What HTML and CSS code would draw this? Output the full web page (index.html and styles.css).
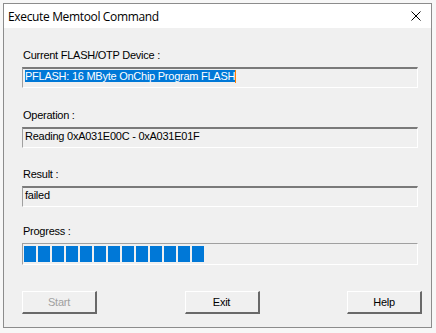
FILE: index.html
```html
<html>
	<head>
		<meta charset="utf-8"/>
		<link rel="stylesheet" href="styles.css">
	</head>
	<body>
		<div class="desktop">
			<div class="dialog">
				<div class="titlebar">
					<span class="title">Execute Memtool Command</span>
					<svg class="close" width="10" height="10" viewBox="0 0 10 10">
						<path d="M0.5 0.5 L9.5 9.5 M9.5 0.5 L0.5 9.5" stroke="#000" stroke-width="1" fill="none"/>
					</svg>
				</div>
				<div class="client">
					<div class="group g1">
						<div class="label">Current FLASH/OTP Device :</div>
						<div class="field"><span class="selected">PFLASH: 16 MByte OnChip Program FLASH</span><span class="caret"></span></div>
					</div>
					<div class="group g2">
						<div class="label">Operation :</div>
						<div class="field">Reading 0xA031E00C - 0xA031E01F</div>
					</div>
					<div class="group g3">
						<div class="label">Result :</div>
						<div class="field">failed</div>
					</div>
					<div class="group g4">
						<div class="label">Progress :</div>
						<div class="progress">
							<span class="block"></span><span class="block"></span><span class="block"></span>
							<span class="block"></span><span class="block"></span><span class="block"></span>
							<span class="block"></span><span class="block"></span><span class="block"></span>
							<span class="block"></span><span class="block"></span><span class="block"></span>
							<span class="block"></span>
						</div>
					</div>
					<div class="buttons">
						<button class="btn" disabled>Start</button>
						<button class="btn">Exit</button>
						<button class="btn">Help</button>
					</div>
				</div>
			</div>
		</div>
	</body>
</html>
```

FILE: styles.css
```css
body{
	margin: 0;
	background-color: #e9e9e9;
	font-family: "Liberation Sans", Arial, sans-serif;
	font-size: 11px;
	letter-spacing: -0.25px;
}
.desktop{
	width: 436px;
	height: 333px;
	padding: 3px 0 0 3px;
	box-sizing: border-box;
	background-color: #f7f7f7;
}
.dialog{
	width: 429px;
	height: 325px;
	box-sizing: border-box;
	border: 1px solid #8c8c8c;
	background-color: #f0f0f0;
}
.titlebar{
	height: 24px;
	background-color: #fff;
	display: flex;
	align-items: center;
	justify-content: space-between;
	padding: 0 10px 0 4px;
}
.title{
	font-family: "Open Sans", "Noto Sans", sans-serif;
	font-size: 12px;
	letter-spacing: -0.35px;
	color: #000;
}
.close{
	display: block;
}
.client{
	padding: 21px 13px 0 18px;
}
.g1{
	margin-bottom: 21px;
}
.g2{
	margin-bottom: 20px;
}
.g3{
	margin-bottom: 18px;
}
.label{
	line-height: 13px;
	padding-left: 1px;
	margin-bottom: 5px;
}
.field{
	height: 21px;
	box-sizing: border-box;
	border-top: 2px solid #7a7a7a;
	border-left: 1px solid #a0a0a0;
	border-right: 1px solid #fff;
	border-bottom: 1px solid #fff;
	padding: 1px 0 0 2px;
	line-height: 13px;
	white-space: nowrap;
}
.selected{
	background-color: #0078d7;
	color: #fff;
}
.caret{
	display: inline-block;
	width: 1px;
	height: 13px;
	vertical-align: top;
	background-color: #ff8000;
}
.progress{
	height: 22px;
	box-sizing: border-box;
	border-top: 1px solid #a0a0a0;
	border-left: 1px solid #a0a0a0;
	border-right: 1px solid #fff;
	border-bottom: 1px solid #fff;
	padding: 2px 1px;
	display: flex;
	gap: 2px;
}
.block{
	width: 12px;
	background-color: #0078d7;
}
.buttons{
	display: flex;
	justify-content: space-between;
	padding-top: 26px;
	margin-right: -4px;
}
.btn{
	width: 75px;
	height: 23px;
	font-family: "Liberation Sans", Arial, sans-serif;
	font-size: 11px;
	letter-spacing: -0.25px;
	color: #000;
	background-color: #f0f0f0;
	border-top: 1px solid #fff;
	border-left: 1px solid #fff;
	border-right: 2px solid #696969;
	border-bottom: 2px solid #696969;
	padding: 0;
}
.btn[disabled]{
	color: #a0a0a0;
}
```
